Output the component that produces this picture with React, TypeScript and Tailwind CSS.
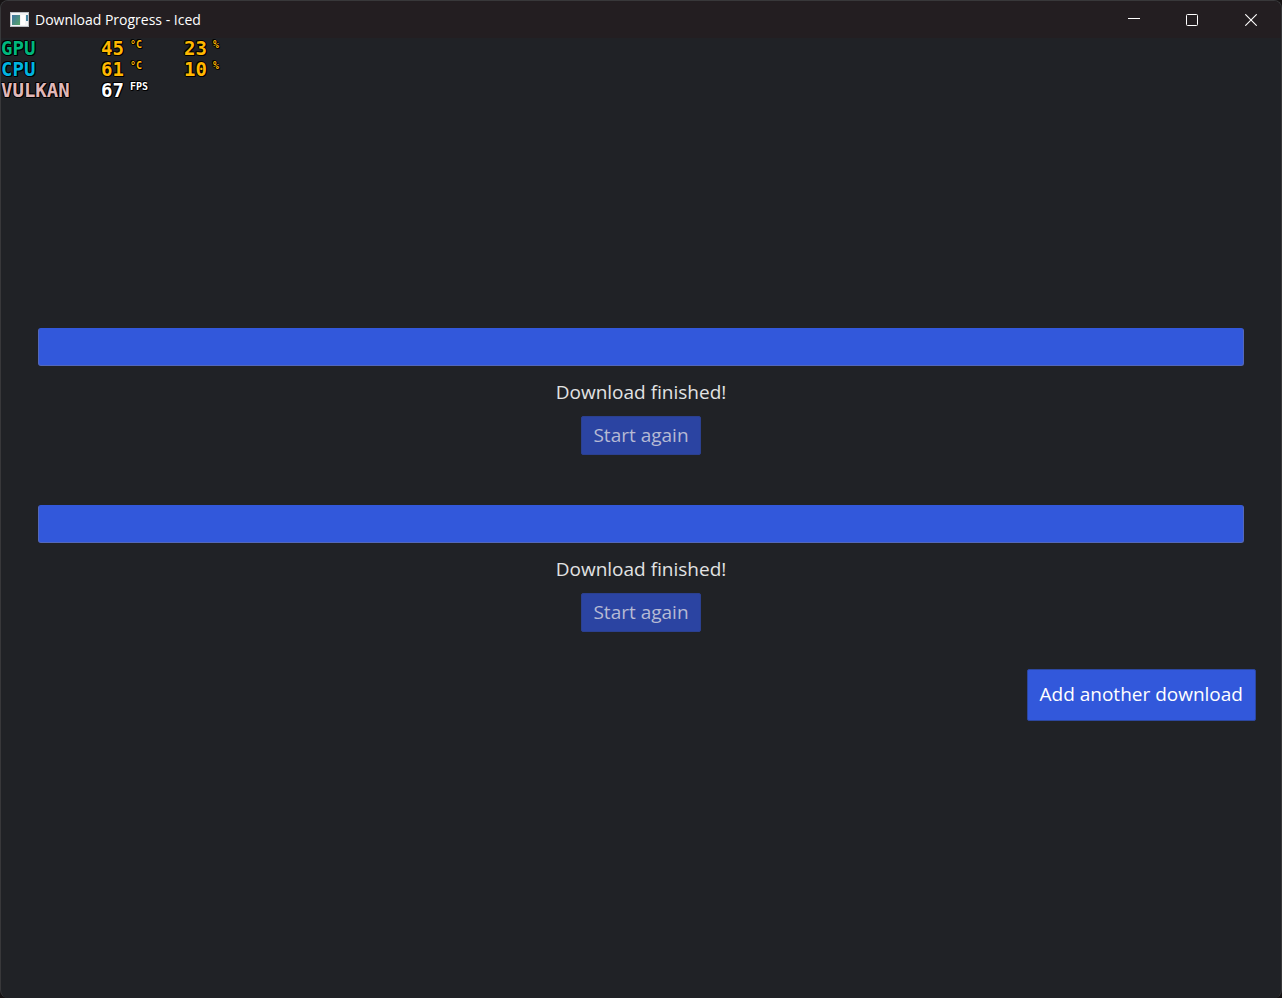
import { useState } from "react";

const outline =
  "[text-shadow:1px_0_#000,-1px_0_#000,0_1px_#000,0_-1px_#000,1px_1px_#000,-1px_-1px_#000]";

function AppIcon() {
  return (
    <svg width="19" height="15" viewBox="0 0 19 15" aria-hidden="true">
      <defs>
        <linearGradient id="pane" x1="0" y1="0" x2="1" y2="1">
          <stop offset="0" stopColor="#3f73a5" />
          <stop offset="1" stopColor="#55a566" />
        </linearGradient>
      </defs>
      <rect width="19" height="15" fill="#b9bec4" />
      <rect x="1" y="1" width="17" height="13" fill="#f3f4f5" />
      <rect x="2" y="3" width="8" height="10" fill="url(#pane)" />
      <rect x="11" y="3" width="4" height="10" fill="#ffffff" />
      <rect x="16" y="3" width="2" height="6" fill="#4585a0" />
    </svg>
  );
}

function TitleBar() {
  const button = "flex h-full w-[58px] items-center justify-center";
  return (
    <header className="flex h-[37px] items-center bg-[#231e21] pl-[9px] text-white">
      <AppIcon />
      <h1 className="ml-1.5 flex-1 font-['Open_Sans','Noto_Sans',sans-serif] text-[14px] leading-5">
        Download Progress - Iced
      </h1>
      <div className="flex h-full">
        <button type="button" aria-label="Minimize" className={button}>
          <svg width="12" height="12" viewBox="0 0 12 12">
            <path d="M0 4.5H12" stroke="#fff" />
          </svg>
        </button>
        <button type="button" aria-label="Maximize" className={button}>
          <svg width="12" height="12" viewBox="0 0 12 12" fill="none">
            <rect x="0.5" y="0.5" width="11" height="11" rx="1" stroke="#fff" />
          </svg>
        </button>
        <button type="button" aria-label="Close" className="flex h-full w-[60px] items-center justify-center">
          <svg width="12" height="12" viewBox="0 0 12 12">
            <path d="M0.3 0.3L11.7 11.7M11.7 0.3L0.3 11.7" stroke="#fff" strokeWidth="1.1" />
          </svg>
        </button>
      </div>
    </header>
  );
}

type Reading = { value: string; unit: string };
type Stat = { name: string; color: string; valueColor: string; readings: Reading[] };

const stats: Stat[] = [
  {
    name: "GPU",
    color: "text-[#00b77d]",
    valueColor: "text-[#ffb800]",
    readings: [
      { value: "45", unit: "°C" },
      { value: "23", unit: "%" },
    ],
  },
  {
    name: "CPU",
    color: "text-[#00b4e0]",
    valueColor: "text-[#ffb800]",
    readings: [
      { value: "61", unit: "°C" },
      { value: "10", unit: "%" },
    ],
  },
  {
    name: "VULKAN",
    color: "text-[#e0b8b8]",
    valueColor: "text-white",
    readings: [{ value: "67", unit: "FPS" }],
  },
];

function StatsOverlay() {
  return (
    <table
      className={`pointer-events-none absolute left-0 top-0 table-fixed border-collapse font-['DejaVu_Sans_Mono',monospace] text-[19px] font-bold leading-[21px] ${outline}`}
    >
      <tbody>
        {stats.map((s) => (
          <tr key={s.name} className="h-[21px]">
            <th scope="row" className={`w-[100px] p-0 text-left ${s.color}`}>
              {s.name}
            </th>
            {s.readings.map((r) => (
              <td key={r.unit} className={`w-[83px] p-0 ${s.valueColor}`}>
                <span className="flex items-start">
                  {r.value}
                  <span className="ml-1.5 mt-px text-[10px] leading-3">{r.unit}</span>
                </span>
              </td>
            ))}
          </tr>
        ))}
      </tbody>
    </table>
  );
}

function Download({ label }: { label: string }) {
  return (
    <section
      aria-label={label}
      className="flex flex-col items-center gap-[13px] px-3 pb-3 pt-[13px] leading-[26px]"
    >
      <div
        role="progressbar"
        aria-label={label}
        aria-valuenow={100}
        aria-valuemin={0}
        aria-valuemax={100}
        className="h-[38px] w-full rounded-[3px] border border-[#5468b8] border-t-[#3258db] bg-[#3258db]"
      />
      <div className="flex flex-col items-center gap-[11px]">
        <p className="text-[#e2e2e3]">Download finished!</p>
        <button
          type="button"
          className="h-[39px] rounded-[2px] border border-[#2b408f] bg-[#2b44a2] px-[11px] text-[#b6bad4]"
        >
          Start again
        </button>
      </div>
    </section>
  );
}

export default function App() {
  const [downloads, setDownloads] = useState([1, 2]);
  return (
    <div className="min-h-screen bg-[#161314]">
      <div className="flex min-h-screen flex-col overflow-hidden rounded-lg border border-b-0 border-[#38383a] bg-[#202226]">
        <TitleBar />
        <main className="relative flex flex-1 flex-col justify-center px-[25px] pb-px font-['Open_Sans','Noto_Sans',sans-serif] text-[19px]">
          <StatsOverlay />
          <div className="flex flex-col gap-[25px]">
            {downloads.map((id) => (
              <Download key={id} label={`Download ${id}`} />
            ))}
            <button
              type="button"
              onClick={() => setDownloads([...downloads, downloads.length + 1])}
              className="h-[52px] self-end rounded-[2px] border border-[#2c479f] bg-[#3258db] px-3 text-white"
            >
              Add another download
            </button>
          </div>
        </main>
      </div>
    </div>
  );
}
